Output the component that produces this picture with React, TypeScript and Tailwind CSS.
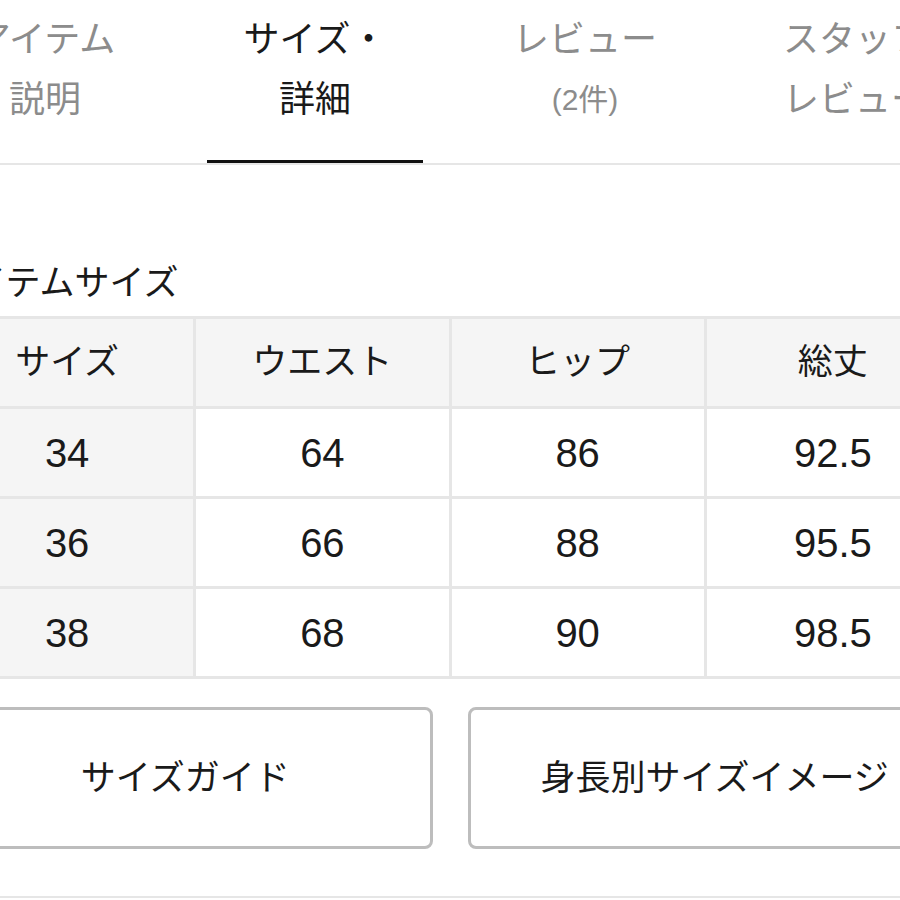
const tabs = [
  { top: "アイテム", bottom: "説明", active: false, small: false },
  { top: "サイズ・", bottom: "詳細", active: true, small: false },
  { top: "レビュー", bottom: "(2件)", active: false, small: true },
  { top: "スタッフ", bottom: "レビュー", active: false, small: false },
];

const headers = ["サイズ", "ウエスト", "ヒップ", "総丈"];

const rows = [
  ["34", "64", "86", "92.5"],
  ["36", "66", "88", "95.5"],
  ["38", "68", "90", "98.5"],
];

const font = "font-['Liberation_Sans','Noto_Sans_CJK_JP',sans-serif]";

export default function App() {
  return (
    <div className={`w-[900px] h-[900px] overflow-hidden bg-white ${font}`}>
      <div className="w-[1080px] ml-[-90px]">
        {/* tabs */}
        <div className="grid grid-cols-4 h-[160px]">
          {tabs.map((t, i) => (
            <div
              key={i}
              className={`flex flex-col items-center pt-[10px] text-[36px] leading-[60px] whitespace-nowrap ${
                t.active ? "text-[#1a1a1a]" : "text-[#8c8c8c]"
              }`}
            >
              <span>{t.top}</span>
              <span className={t.small ? "text-[30px]" : ""}>{t.bottom}</span>
            </div>
          ))}
        </div>
        <div className="grid grid-cols-4 h-[3px]">
          {tabs.map((t, i) => (
            <div key={i} className="flex flex-col border-b-2 border-[#e6e6e6]">
              {t.active && <div className="mx-[27px] h-[3px] bg-[#111]" />}
            </div>
          ))}
        </div>

        <div className="px-[28px]">
          <h2 className="mt-[96px] text-[35px] leading-[48px] text-[#1a1a1a]">
            アイテムサイズ
          </h2>

          <table className="mt-[9px] w-full table-fixed border-collapse text-[#1a1a1a]">
            <thead>
              <tr className="h-[90px] bg-[#f5f5f5]">
                {headers.map((h) => (
                  <th
                    key={h}
                    className="border-[3px] border-[#e6e6e6] text-[35px] font-normal text-center"
                  >
                    {h}
                  </th>
                ))}
              </tr>
            </thead>
            <tbody>
              {rows.map((r) => (
                <tr key={r[0]} className="h-[90px]">
                  {r.map((c, j) => (
                    <td
                      key={j}
                      className={`border-[3px] border-[#e6e6e6] text-[40px] text-center ${
                        j === 0 ? "bg-[#f5f5f5]" : "bg-white"
                      }`}
                    >
                      {c}
                    </td>
                  ))}
                </tr>
              ))}
            </tbody>
          </table>

          <div className="mt-[28px] grid grid-cols-2 gap-[35px]">
            <button className="h-[142px] rounded-lg border-[3px] border-[#bdbdbd] bg-white text-[35px] text-[#1a1a1a]">
              サイズガイド
            </button>
            <button className="h-[142px] rounded-lg border-[3px] border-[#bdbdbd] bg-white text-[35px] text-[#1a1a1a]">
              身長別サイズイメージ
            </button>
          </div>
        </div>

        <div className="mt-[47px] h-[2px] bg-[#e6e6e6]" />
      </div>
    </div>
  );
}
